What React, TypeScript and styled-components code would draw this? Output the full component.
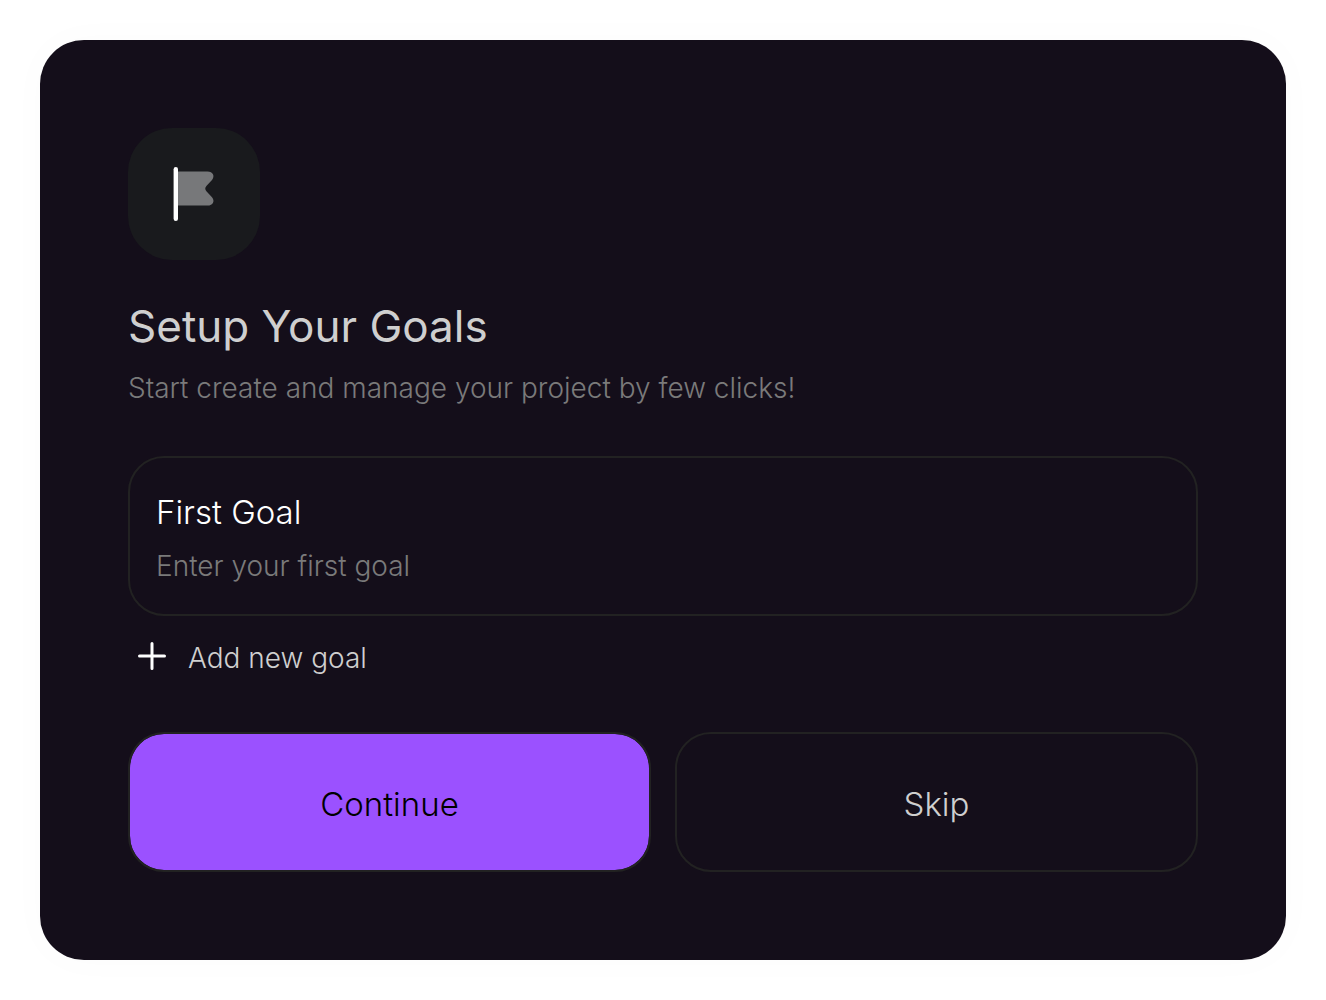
import React, { useId, useState } from 'react';
import styled, { createGlobalStyle } from 'styled-components';

const GlobalStyle = createGlobalStyle`
  * { box-sizing: border-box; }
  body {
    margin: 0;
    background: #ffffff;
    font-family: Inter, "Open Sans", sans-serif;
    -webkit-font-smoothing: antialiased;
  }
  button, input { font: inherit; }
`;

const Page = styled.main`
  padding: 40px;
`;

const Card = styled.section`
  display: flex;
  flex-direction: column;
  padding: 88px;
  border-radius: 44px;
  background: #140e1a;
  box-shadow: 0 0 40px rgba(0, 0, 0, 0.02);
`;

const IconTile = styled.div`
  display: grid;
  place-items: center;
  width: 132px;
  height: 132px;
  border-radius: 44px;
  background: #191a1d;
`;

const Title = styled.h1`
  margin: 36px 0 0;
  font-size: 44px;
  line-height: 60px;
  font-weight: 400;
  color: #cfcfcf;
`;

const Subtitle = styled.p`
  margin: 12px 0 0;
  font-size: 28px;
  line-height: 40px;
  font-weight: 300;
  color: #7a7a7a;
`;

const Goals = styled.div`
  display: flex;
  flex-direction: column;
  gap: 20px;
  margin-top: 48px;
`;

const Field = styled.div`
  display: flex;
  flex-direction: column;
  gap: 12px;
  padding: 32px 26px 28px;
  border: 2px solid #222222;
  border-radius: 36px;
`;

const FieldName = styled.label`
  font-size: 33px;
  line-height: 44px;
  font-weight: 300;
  color: #ffffff;
`;

const FieldInput = styled.input`
  width: 100%;
  height: 40px;
  padding: 0;
  border: 0;
  outline: 0;
  background: transparent;
  font-size: 28px;
  font-weight: 300;
  color: #ffffff;
  &::placeholder { color: #7a7a7a; opacity: 1; }
`;

const AddButton = styled.button`
  display: flex;
  align-items: center;
  align-self: flex-start;
  gap: 22px;
  padding: 0 10px;
  border: 0;
  background: none;
  font-size: 28px;
  line-height: 36px;
  font-weight: 300;
  color: #cfcfcf;
  cursor: pointer;
`;

const AddLabel = styled.span`
  padding-top: 4px;
`;

const Actions = styled.div`
  display: grid;
  grid-template-columns: 1fr 1fr;
  gap: 24px;
  margin-top: 56px;
`;

const Action = styled.button<{ $primary?: boolean }>`
  height: 140px;
  padding: 4px 0 0;
  border: 2px solid #222222;
  border-radius: 36px;
  background: ${(p) => (p.$primary ? '#9b51ff' : 'transparent')};
  background-clip: padding-box;
  font-size: 33px;
  line-height: 44px;
  font-weight: 300;
  color: ${(p) => (p.$primary ? '#000000' : '#cfcfcf')};
  cursor: pointer;
`;

const ordinals = ['First', 'Second', 'Third', 'Fourth', 'Fifth'];

function FlagIcon() {
  return (
    <svg width="64" height="64" viewBox="0 0 64 64" fill="none" aria-hidden="true">
      <path
        d="M14 9.5H45.5C51 9.5 53.2 14 50 18L44.6 23.8C42.8 25.7 42.8 27.5 44.6 29.4L50 35.2C53.2 39 51 43.6 45.5 43.6H14Z"
        fill="#77787a"
      />
      <path d="M13.8 7.2V56.8" stroke="#ffffff" strokeWidth="4.4" strokeLinecap="round" />
    </svg>
  );
}

function PlusIcon() {
  return (
    <svg width="28" height="28" viewBox="0 0 28 28" fill="none" aria-hidden="true">
      <path d="M14 1.5V26.5M1.5 14H26.5" stroke="#ffffff" strokeWidth="3" strokeLinecap="round" />
    </svg>
  );
}

function GoalField({ ordinal }: { ordinal: string }) {
  const id = useId();
  return (
    <Field>
      <FieldName htmlFor={id}>{ordinal} Goal</FieldName>
      <FieldInput id={id} type="text" placeholder={`Enter your ${ordinal.toLowerCase()} goal`} />
    </Field>
  );
}

export default function App() {
  const [count, setCount] = useState(1);
  return (
    <>
      <GlobalStyle />
      <Page>
        <Card>
          <IconTile>
            <FlagIcon />
          </IconTile>
          <Title>Setup Your Goals</Title>
          <Subtitle>Start create and manage your project by few clicks!</Subtitle>
          <Goals>
            {ordinals.slice(0, count).map((ordinal) => (
              <GoalField key={ordinal} ordinal={ordinal} />
            ))}
            <AddButton type="button" onClick={() => setCount(Math.min(count + 1, ordinals.length))}>
              <PlusIcon />
              <AddLabel>Add new goal</AddLabel>
            </AddButton>
          </Goals>
          <Actions>
            <Action type="button" $primary>Continue</Action>
            <Action type="button">Skip</Action>
          </Actions>
        </Card>
      </Page>
    </>
  );
}
